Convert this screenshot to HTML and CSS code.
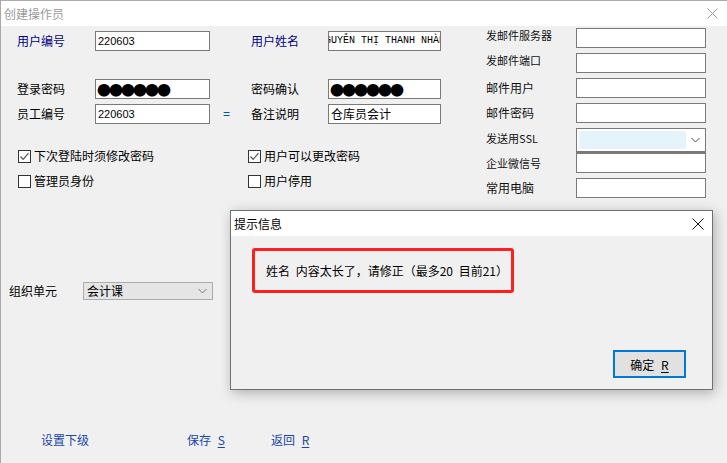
FILE: index.html
```html
<!DOCTYPE html>
<html lang="zh-CN">
<head>
    <meta charset="UTF-8">
    <title>创建操作员</title>
    <link rel="stylesheet" href="styles.css">
</head>
<body>
    <div class="window">
        <div class="titlebar">
            <span class="title">创建操作员</span>
            <svg class="close" width="11" height="11" viewBox="0 0 11 11"><path d="M0.5 0.5L10.5 10.5M10.5 0.5L0.5 10.5" stroke="#9a9a9a" stroke-width="1" fill="none"/></svg>
        </div>
        <div class="client">
            <div class="main">
                <div class="left">
                    <div class="row first">
                        <span class="lbl navy">用户编号</span>
                        <div class="field">220603</div>
                        <span class="mid"></span>
                        <span class="lbl2 navy">用户姓名</span>
                        <div class="field field2 mono"><span class="scroll">NGUYỄN THỊ THANH NHÀN</span></div>
                    </div>
                    <div class="row second">
                        <span class="lbl">登录密码</span>
                        <div class="field dots">●●●●●●</div>
                        <span class="mid"></span>
                        <span class="lbl2">密码确认</span>
                        <div class="field field2 dots">●●●●●●</div>
                    </div>
                    <div class="row third">
                        <span class="lbl">员工编号</span>
                        <div class="field">220603</div>
                        <span class="mid eq">=</span>
                        <span class="lbl2">备注说明</span>
                        <div class="field field2 cjk">仓库员会计</div>
                    </div>
                    <div class="checks">
                        <label class="check"><span class="box"><svg width="11" height="11" viewBox="0 0 11 11"><path d="M1.5 5.5L4.2 8.3L9.5 2.2" stroke="#555" stroke-width="1.2" fill="none"/></svg></span>下次登陆时须修改密码</label>
                        <label class="check"><span class="box"><svg width="11" height="11" viewBox="0 0 11 11"><path d="M1.5 5.5L4.2 8.3L9.5 2.2" stroke="#555" stroke-width="1.2" fill="none"/></svg></span>用户可以更改密码</label>
                        <label class="check"><span class="box"></span>管理员身份</label>
                        <label class="check"><span class="box"></span>用户停用</label>
                    </div>
                    <div class="org">
                        <span class="org-lbl">组织单元</span>
                        <div class="select">
                            <span>会计课</span>
                            <svg width="9" height="6" viewBox="0 0 9 6"><path d="M0.5 1L4.5 5L8.5 1" stroke="#777" stroke-width="1" fill="none"/></svg>
                        </div>
                    </div>
                </div>
                <div class="right">
                    <div class="mrow"><span class="mlbl small up">发邮件服务器</span><div class="mfield"></div></div>
                    <div class="mrow"><span class="mlbl small up">发邮件端口</span><div class="mfield"></div></div>
                    <div class="mrow"><span class="mlbl">邮件用户</span><div class="mfield"></div></div>
                    <div class="mrow"><span class="mlbl">邮件密码</span><div class="mfield"></div></div>
                    <div class="mrow combo-row"><span class="mlbl small">发送用SSL</span>
                        <div class="combo">
                            <span class="combo-sel"></span>
                            <svg width="9" height="6" viewBox="0 0 9 6"><path d="M0.5 1L4.5 5L8.5 1" stroke="#444" stroke-width="1" fill="none"/></svg>
                        </div>
                    </div>
                    <div class="mrow tight"><span class="mlbl small">企业微信号</span><div class="mfield"></div></div>
                    <div class="mrow"><span class="mlbl">常用电脑</span><div class="mfield"></div></div>
                </div>
            </div>
            <div class="actions">
                <a class="link w1" href="#">设置下级</a>
                <a class="link w2" href="#">保存 <u>S</u></a>
                <a class="link" href="#">返回 <u>R</u></a>
            </div>
        </div>

        <div class="dialog">
            <div class="dlg-title">
                <span>提示信息</span>
                <svg width="12" height="12" viewBox="0 0 12 12"><path d="M0.5 0.5L11.5 11.5M11.5 0.5L0.5 11.5" stroke="#111" stroke-width="1" fill="none"/></svg>
            </div>
            <div class="dlg-body">
                <div class="msg">姓名 内容太长了，请修正（最多20 目前21）</div>
                <div class="dlg-foot">
                    <button class="ok">确定 <u>R</u></button>
                </div>
            </div>
        </div>
    </div>
</body>
</html>
```

FILE: styles.css
```css
*{margin: 0; padding: 0; box-sizing: border-box;}
body{width: 727px; height: 463px; overflow: hidden; background-color: #f0f0f0; font-family: "Noto Sans CJK SC", sans-serif; font-size: 12px; line-height: 16px; color: #000;}
a{text-decoration: none;}
u{text-underline-offset: 2px;}
.window{position: relative; height: 463px; border-top: 1px solid #ababab; border-left: 1px solid #a9a9a9; background-color: #f0f0f0;}

/* title bar */
.titlebar{height: 25px; background-color: #fff; display: flex; align-items: center; justify-content: space-between; padding: 0 9px 0 3px;}
.titlebar .title{color: #9a9a9a; font-size: 12px;}

/* left form */
.main{display: flex; align-items: flex-start;}
.left{width: 440px; padding-top: 5px;}
.row{display: flex; align-items: center; height: 20px; padding-left: 16px;}
.row.second{margin-top: 28px;}
.row.third{margin-top: 5px;}
.lbl{width: 78px;}
.lbl2{width: 77px;}
.navy{color: #000080;}
.mid{width: 41px; padding-left: 13px; color: #0050c8; font-family: "Liberation Sans", sans-serif; font-size: 12px;}
.field{width: 115px; height: 20px; border: 1px solid #7a7a7a; background-color: #fff; padding: 0 2px; display: flex; align-items: center; overflow: hidden; white-space: nowrap; font-family: "Liberation Sans", sans-serif; font-size: 11px;}
.field2{width: 113px;}
.field.cjk{font-family: "Noto Sans CJK SC", sans-serif; font-size: 12px;}
.field.mono{font-family: "Liberation Mono", monospace; font-size: 10px;}
.field .scroll{margin-left: -12px;}
.field.dots{font-family: "Noto Sans CJK SC", sans-serif; font-size: 14px; letter-spacing: -2px; padding-left: 1px;}

/* checkboxes */
.checks{margin-top: 24px; padding-left: 17px; display: grid; grid-template-columns: 230px auto; row-gap: 9px;}
.check{display: flex; align-items: center; height: 16px;}
.box{width: 13px; height: 13px; border: 1px solid #333; background-color: #fff; margin-right: 3px; display: flex; align-items: center; justify-content: center;}

/* org unit */
.org{margin-top: 92px; padding-left: 8px; display: flex; align-items: center; height: 20px;}
.org-lbl{width: 74px;}
.select{width: 130px; height: 18px; border: 1px solid #adadad; background-color: #e5e5e5; display: flex; align-items: center; justify-content: space-between; padding: 0 5px 0 3px;}

/* right column */
.right{margin-left: 45px; padding-top: 2px;}
.mrow{display: flex; align-items: center; height: 20px; margin-bottom: 5px;}
.mlbl{width: 90px; color: #111;}
.mlbl.small{font-size: 11px;}
.mlbl.up{align-self: flex-start; margin-top: -1px;}
.mfield{width: 130px; height: 20px; border: 1px solid #7a7a7a; background-color: #fff;}
.combo-row{height: 25px; margin-bottom: 0; align-items: flex-start;}
.combo-row .mlbl{padding-top: 2px;}
.combo{width: 130px; height: 25px; border: 1px solid #7a7a7a; border-bottom-width: 2px; background-color: #fff; display: flex; align-items: center; justify-content: space-between; padding: 0 5px 0 2px;}
.combo-sel{width: 107px; height: 18px; background-color: #e5f3fb;}

/* bottom buttons */
.actions{margin-top: 131px; padding-left: 40px; display: flex; height: 16px;}
.link{color: #1846a8; word-spacing: 4px;}
.link.w1{width: 146px;}
.link.w2{width: 84px;}

/* message dialog */
.dialog{position: absolute; left: 229px; top: 209px; width: 483px; height: 180px; border: 1px solid #707070; background-color: #f0f0f0; box-shadow: 2px 3px 12px rgba(0,0,0,0.28); display: flex; flex-direction: column;}
.dlg-title{height: 25px; background-color: #fff; display: flex; align-items: center; justify-content: space-between; padding: 0 8px 0 3px;}
.dlg-body{flex: 1; display: flex; flex-direction: column; justify-content: space-between; padding: 12px 26px 11px 21px;}
.msg{width: 262px; height: 45px; border: 3px solid #ff1f1f; border-radius: 3px; padding-left: 11px; display: flex; align-items: center; word-spacing: 3px; white-space: pre;}
.dlg-foot{display: flex; justify-content: flex-end;}
.ok{width: 73px; height: 28px; border: 2px solid #0078d7; background-color: #e1e1e1; font-family: "Noto Sans CJK SC", sans-serif; font-size: 12px; color: #000; word-spacing: 4px;}
```
